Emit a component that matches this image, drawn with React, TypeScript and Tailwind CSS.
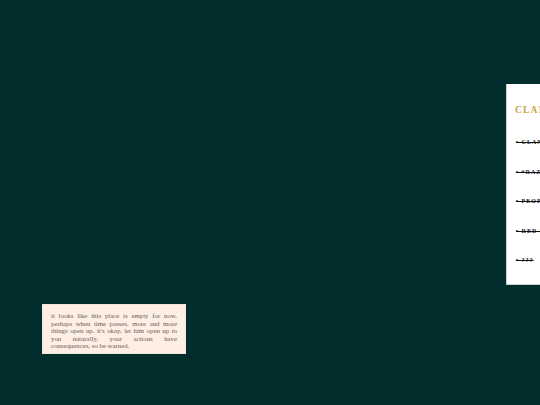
import React from "react";

const items = ["CLAN HISTORY", "“RAZOR”", "PEOPLE", "RED LINE", "???"];

export default function App() {
  return (
    <div
      className="w-[540px] h-[405px] overflow-hidden bg-[#012d2d] flex"
      style={{ fontFamily: '"Liberation Serif", "Times New Roman", serif' }}
    >
      <div className="w-[506px] shrink-0 pt-[304px] pl-[42px]">
        <div className="w-[144px] h-[50px] bg-[#fdefe3] border border-[#f6e4d6] px-[8px] pt-[7px]">
          <p className="text-[6.8px] leading-[7.5px] text-[#6b5c58] text-justify">
            it looks like this place is empty for now. perhaps when time passes, more and more
            things open up. it's okay, let him open up to you naturally. your actions have
            consequences, so be warned.
          </p>
        </div>
      </div>
      <div className="w-[200px] shrink-0 mt-[84px] h-[201px] bg-white border-l border-b border-[#c9cfcf] pl-[8px] pt-[21px] pb-[20px]">
        <div className="text-[9.5px] leading-[10px] font-bold tracking-[1.2px] text-[#c8a43f] whitespace-nowrap">
          CLANS &amp; LORE
        </div>
        <div className="mt-[22px] ml-[1px] flex flex-col gap-[19.5px]">
          {items.map((t) => (
            <div
              key={t}
              className="text-[6px] leading-[10px] font-bold tracking-[1px] text-[#111111] line-through whitespace-nowrap"
            >
              {"•\u00a0" + t}
            </div>
          ))}
        </div>
      </div>
    </div>
  );
}
